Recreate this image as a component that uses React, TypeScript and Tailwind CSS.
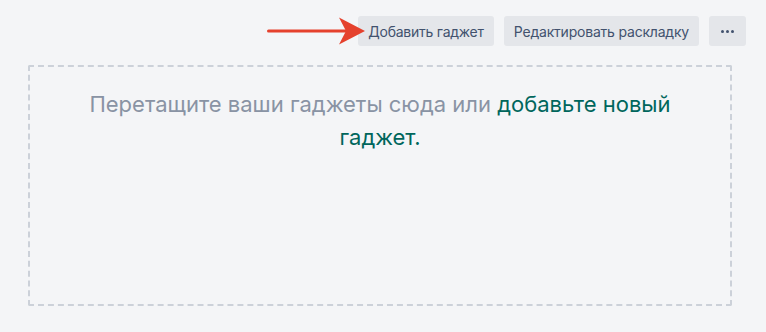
import React from "react";

export default function App() {
  return (
    <div
      className="w-[766px] h-[332px] bg-[#f4f5f7] overflow-hidden"
      style={{ fontFamily: "Inter, 'Noto Sans', sans-serif" }}
    >
      <div className="flex items-center justify-end gap-[10px] pt-[16px] pr-[20px]">
        <svg width="98" height="30" viewBox="0 0 98 30" className="relative z-10 mr-[-17px]">
          <line x1="1.5" y1="15" x2="82" y2="15" stroke="#e5412d" strokeWidth="3" strokeLinecap="round" />
          <polygon points="72,1.5 98,15 72,28.5 79,15" fill="#e5412d" />
        </svg>
        <button className="h-[30px] px-[10px] rounded-[3px] bg-[#e4e6ea] text-[#42526e] text-[14px] tracking-[-0.25px]">
          Добавить гаджет
        </button>
        <button className="h-[30px] px-[10px] rounded-[3px] bg-[#e4e6ea] text-[#42526e] text-[14px] tracking-[-0.2px]">
          Редактировать раскладку
        </button>
        <button className="h-[30px] w-[37px] rounded-[3px] bg-[#e4e6ea] flex items-center justify-center gap-[2px]">
          <span className="w-[3px] h-[3px] rounded-full bg-[#42526e]" />
          <span className="w-[3px] h-[3px] rounded-full bg-[#42526e]" />
          <span className="w-[3px] h-[3px] rounded-full bg-[#42526e]" />
        </button>
      </div>
      <div className="ml-[28px] mr-[34px] mt-[19px] h-[241px] border-2 border-dashed border-[#ccd1d9] rounded-[2px] pt-[21px] px-[20px]">
        <p className="text-center text-[22px] leading-[33px] text-[#8993a4] mx-auto max-w-[620px]">
          Перетащите ваши гаджеты сюда или{" "}
          <span className="text-[#00665c]">добавьте новый гаджет.</span>
        </p>
      </div>
    </div>
  );
}
